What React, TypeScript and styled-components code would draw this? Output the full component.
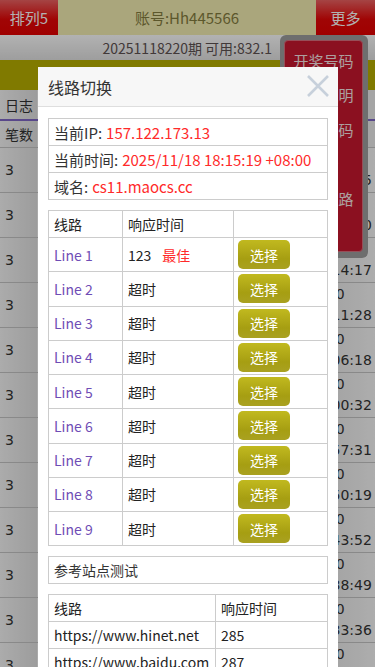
import React from "react";
import styled, { createGlobalStyle } from "styled-components";

const GlobalStyle = createGlobalStyle`
  html, body {
    margin: 0;
    padding: 0;
    overflow: hidden;
    background: #e8e8e8;
    font-family: "Noto Sans CJK SC", "Noto Sans", sans-serif;
  }
  * {
    box-sizing: border-box;
  }
`;

const Page = styled.div`
  width: 375px;
  min-height: 667px;
`;

const TopBar = styled.header`
  display: flex;
  height: 35px;
`;

const SideButton = styled.div<{ $w: number }>`
  width: ${(p) => p.$w}px;
  display: flex;
  align-items: center;
  justify-content: center;
  background: linear-gradient(#ec6262, #e60808 55%, #e40000);
  color: #fff;
  font-size: 15px;
`;

const Account = styled.div`
  flex: 1;
  display: flex;
  align-items: center;
  justify-content: center;
  background: #f4eeb2;
  color: #857d40;
  font-size: 15px;
`;

const InfoBar = styled.div`
  height: 25px;
  display: flex;
  align-items: center;
  justify-content: flex-end;
  padding-right: 103px;
  background: linear-gradient(#fff, #e2e2e2);
  color: #5e5252;
  font-size: 14px;
`;

const OliveBar = styled.div`
  height: 30px;
  background: #b8af00;
`;

const LogTable = styled.div`
  font-family: "DejaVu Sans", "Noto Sans CJK SC", sans-serif;
  color: #333;
`;

const LogRow = styled.div<{ $h: number; $head?: boolean }>`
  display: grid;
  grid-template-columns: 38px 1fr 66px;
  height: ${(p) => p.$h}px;
  border-bottom: ${(p) => (p.$head ? "2px solid #8068c6" : "1px solid #c4c4c4")};
`;

const LogCell = styled.div<{ $first?: boolean }>`
  display: flex;
  align-items: center;
  padding-left: ${(p) => (p.$first ? 5 : 1)}px;
  font-size: 14px;
  background: ${(p) =>
    p.$first ? "linear-gradient(to right, #f6f6f6, #e0e0e0)" : "#ececec"};
  border-right: ${(p) => (p.$first ? "1px solid #f4f4f4" : "none")};
`;

const TimeCell = styled.div`
  display: flex;
  flex-direction: column;
  justify-content: center;
  line-height: 21px;
  font-size: 14px;
  background: linear-gradient(to right, #e4e4e4, #f8f8f8);
`;

const MoreMenu = styled.div`
  position: absolute;
  top: 35px;
  left: 280px;
  width: 88px;
  height: 223px;
  padding: 5px 5px 6px 4px;
  background: #9e9e9e;
  border-radius: 6px;
  z-index: 10;
`;

const MenuInner = styled.ul`
  list-style: none;
  margin: 0;
  height: 100%;
  padding: 2px 0 0;
  background: #c8172e;
  border: 1px solid #d9707f;
  border-radius: 4px;
`;

const MenuItem = styled.li`
  height: 34.5px;
  display: flex;
  align-items: center;
  justify-content: center;
  color: #f6e4e4;
  font-size: 15px;
`;

const Backdrop = styled.div`
  position: fixed;
  inset: 0;
  background: rgba(0, 0, 0, 0.3);
  z-index: 20;
`;

const Modal = styled.div`
  position: absolute;
  top: 67px;
  left: 38px;
  width: 300px;
  background: #fff;
  z-index: 30;
`;

const ModalHead = styled.div`
  height: 40px;
  display: flex;
  align-items: center;
  justify-content: space-between;
  padding: 0 8px 0 10px;
  background: #f7f7f7;
  border-bottom: 1px solid #dedede;
`;

const ModalTitle = styled.h3`
  margin: 0;
  font-size: 16px;
  font-weight: 400;
  color: #333;
`;

const ModalBody = styled.div`
  display: flex;
  flex-direction: column;
  gap: 10px;
  padding: 11px 10px;
`;

const InfoBox = styled.div`
  border: 1px solid #ccc;
`;

const InfoRow = styled.div<{ $size?: number }>`
  height: 26px;
  display: flex;
  align-items: center;
  padding-left: 5px;
  font-size: ${(p) => p.$size ?? 15}px;
  color: #333;
  & + & {
    border-top: 1px solid #ccc;
    height: 27px;
  }
`;

const Red = styled.span<{ $gap?: number }>`
  color: #ff2a2a;
  margin-left: ${(p) => p.$gap ?? 4}px;
`;

const Grid = styled.div<{ $cols: string }>`
  display: grid;
  grid-template-columns: ${(p) => p.$cols};
  border-top: 1px solid #ccc;
  border-left: 1px solid #ccc;
`;

const Cell = styled.div<{ $h: number; $purple?: boolean; $pad?: number }>`
  height: ${(p) => p.$h}px;
  display: flex;
  align-items: center;
  padding-left: ${(p) => p.$pad ?? 5}px;
  border-right: 1px solid #ccc;
  border-bottom: 1px solid #ccc;
  font-size: 14px;
  color: ${(p) => (p.$purple ? "#6f4db5" : "#222")};
  white-space: nowrap;
`;

const PickButton = styled.button`
  width: 52px;
  height: 29px;
  border: none;
  border-radius: 5px;
  background: linear-gradient(#c1b91f, #a69e12 65%, #a9a121);
  color: #fff;
  font-family: inherit;
  font-size: 14px;
  padding: 0;
`;

const CloseIcon = () => (
  <svg width="24" height="24" viewBox="0 0 24 24">
    <path
      d="M2 1 L22 21 M22 1 L2 21"
      stroke="#c7d0db"
      strokeWidth="2.6"
      fill="none"
    />
  </svg>
);

const logTimes = [
  "18:19:05",
  "18:16:40",
  "18:14:17",
  "18:11:28",
  "18:06:18",
  "18:00:32",
  "17:57:31",
  "17:50:19",
  "17:43:52",
  "17:38:49",
  "17:33:36",
  "17:30:10",
];

const menuItems = ["开奖号码", "玩法说明", "修改密码", "公告", "切换线路", "退出"];

const lines = ["123", "超时", "超时", "超时", "超时", "超时", "超时", "超时", "超时"];

const refSites = [
  { url: "https://www.hinet.net", ms: "285" },
  { url: "https://www.baidu.com", ms: "287" },
  { url: "https://www.google.com", ms: "301" },
];

const App: React.FC = () => {
  return (
    <>
      <GlobalStyle />
      <Page>
        <TopBar>
          <SideButton $w={58}>排列5</SideButton>
          <Account>账号:Hh445566</Account>
          <SideButton $w={59}>更多</SideButton>
        </TopBar>
        <InfoBar>20251118220期 可用:832.1</InfoBar>
        <OliveBar />
        <LogTable>
          <LogRow $h={31} $head>
            <LogCell $first>日志</LogCell>
            <LogCell />
            <LogCell />
          </LogRow>
          <LogRow $h={27}>
            <LogCell $first>笔数</LogCell>
            <LogCell />
            <LogCell />
          </LogRow>
          {logTimes.map((t, i) => (
            <LogRow $h={45} key={i}>
              <LogCell $first>3</LogCell>
              <LogCell />
              <TimeCell>
                <span>1120</span>
                <span>{t}</span>
              </TimeCell>
            </LogRow>
          ))}
        </LogTable>
      </Page>

      <MoreMenu>
        <MenuInner>
          {menuItems.map((m) => (
            <MenuItem key={m}>{m}</MenuItem>
          ))}
        </MenuInner>
      </MoreMenu>

      <Backdrop />

      <Modal>
        <ModalHead>
          <ModalTitle>线路切换</ModalTitle>
          <CloseIcon />
        </ModalHead>
        <ModalBody>
          <InfoBox>
            <InfoRow>
              当前IP:<Red>157.122.173.13</Red>
            </InfoRow>
            <InfoRow>
              当前时间:<Red>2025/11/18 18:15:19 +08:00</Red>
            </InfoRow>
            <InfoRow>
              域名:<Red>cs11.maocs.cc</Red>
            </InfoRow>
          </InfoBox>

          <Grid $cols="74px 111px 1fr">
            <Cell $h={27}>线路</Cell>
            <Cell $h={27}>响应时间</Cell>
            <Cell $h={27} />
            {lines.map((r, i) => (
              <React.Fragment key={i}>
                <Cell $h={34.25} $purple>
                  Line {i + 1}
                </Cell>
                <Cell $h={34.25}>
                  {r}
                  {i === 0 && <Red $gap={11}>最佳</Red>}
                </Cell>
                <Cell $h={34.25} $pad={4}>
                  <PickButton>选择</PickButton>
                </Cell>
              </React.Fragment>
            ))}
          </Grid>

          <InfoBox>
            <InfoRow $size={14}>参考站点测试</InfoRow>
          </InfoBox>

          <Grid $cols="167px 1fr">
            <Cell $h={27}>线路</Cell>
            <Cell $h={27}>响应时间</Cell>
            {refSites.map((s) => (
              <React.Fragment key={s.url}>
                <Cell $h={27}>{s.url}</Cell>
                <Cell $h={27}>{s.ms}</Cell>
              </React.Fragment>
            ))}
          </Grid>
        </ModalBody>
      </Modal>
    </>
  );
};

export default App;
